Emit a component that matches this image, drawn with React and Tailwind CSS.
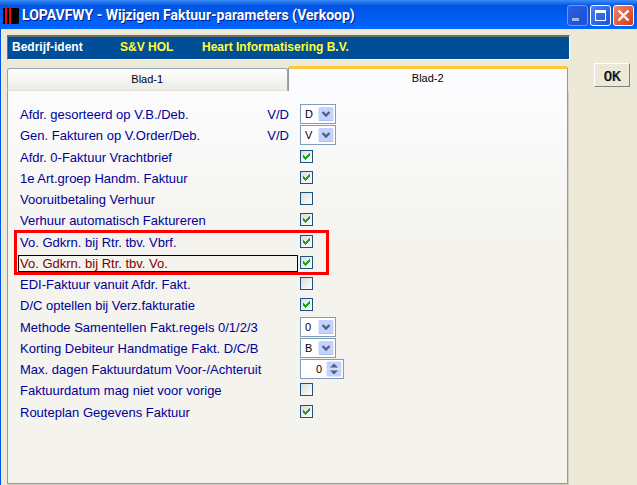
import { useState } from "react";
import clsx from "clsx";

// Rows are kept in small groups, each group is separated by one pixel
const GROUPS = [
    [
        { id: "sortering", label: "Afdr. gesorteerd op V.B./Deb.", hint: "V/D", type: "select", value: "D", options: ["V", "D"] },
        { id: "genereren", label: "Gen. Fakturen op V.Order/Deb.", hint: "V/D", type: "select", value: "V", options: ["V", "D"] },
    ],
    [
        { id: "nulfaktuur", label: "Afdr. 0-Faktuur Vrachtbrief", type: "check", value: true },
        { id: "artgroep", label: "1e Art.groep Handm. Faktuur", type: "check", value: true },
        { id: "vooruit", label: "Vooruitbetaling Verhuur", type: "check", value: false },
        { id: "verhuur", label: "Verhuur automatisch Faktureren", type: "check", value: true },
    ],
    [
        { id: "vbrf", label: "Vo. Gdkrn. bij Rtr. tbv. Vbrf.", type: "check", value: true, marked: true },
        { id: "vo", label: "Vo. Gdkrn. bij Rtr. tbv. Vo.", type: "check", value: true },
        { id: "edi", label: "EDI-Faktuur vanuit Afdr. Fakt.", type: "check", value: false },
        { id: "optellen", label: "D/C optellen bij Verz.fakturatie", type: "check", value: true },
    ],
    [
        { id: "methode", label: "Methode Samentellen Fakt.regels 0/1/2/3", type: "select", value: "0", options: ["0", "1", "2", "3"] },
        { id: "korting", label: "Korting Debiteur Handmatige Fakt. D/C/B", type: "select", value: "B", options: ["D", "C", "B"] },
        { id: "maxdagen", label: "Max. dagen Faktuurdatum Voor-/Achteruit", type: "number", value: 0 },
        { id: "vorige", label: "Faktuurdatum mag niet voor vorige", type: "check", value: false },
    ],
    [{ id: "routeplan", label: "Routeplan Gegevens Faktuur", type: "check", value: true }],
];

function CheckField({ id, defaultChecked }) {
    return (
        <span className="relative mt-[3px] block size-[13px]">
            <input
                id={id}
                type="checkbox"
                defaultChecked={defaultChecked}
                className="peer block size-[13px] appearance-none border border-[#1c5180] bg-linear-to-br from-[#dcdcd7] to-white outline-none"
            />
            <svg
                viewBox="0 0 13 13"
                shapeRendering="crispEdges"
                className="pointer-events-none absolute inset-0 hidden size-[13px] peer-checked:block"
            >
                <path d="M3 5h1v1h1v1h1v-1h1v-1h1v-1h1v-1h1v3h-1v1h-1v1h-1v1h-1v1h-1v-1h-1v-1h-1z" fill="#21a121" />
            </svg>
        </span>
    );
}

function SelectField({ id, value, options }) {
    return (
        <span className="relative block h-5 w-9">
            <select
                id={id}
                defaultValue={value}
                className="block h-5 w-9 appearance-none border border-[#7f9db9] bg-white pl-1 text-[11px] leading-4 text-black outline-none"
            >
                {options.map((option) => (
                    <option key={option}>{option}</option>
                ))}
            </select>
            <svg viewBox="0 0 16 16" className="pointer-events-none absolute top-[2px] right-[2px] size-4">
                <rect x="0.5" y="1" width="15" height="14" rx="1.5" fill="#c3d3fd" />
                <path d="M1 14.5h14" stroke="#a9bff5" />
                <path d="M4.5 6l3.5 3.5L11.500 6" fill="none" stroke="#4d6185" strokeWidth="2.4" />
            </svg>
        </span>
    );
}

function NumberField({ id, value }) {
    return (
        <span className="relative block h-5 w-11">
            <input
                id={id}
                type="text"
                inputMode="numeric"
                defaultValue={value}
                className="block h-5 w-11 border border-[#7f9db9] bg-white pr-[21px] text-right text-[11px] text-black outline-none"
            />
            <svg viewBox="0 0 16 16" className="pointer-events-none absolute top-[2px] right-[2px] size-4">
                <rect x="0.5" y="0.5" width="15" height="15" rx="1.5" fill="#c3d3fd" />
                <path d="M1 8h14" stroke="#dfe8ff" />
                <path d="M4 6.500L8 2.500l4 4zM4 9.500l4 4l4-4z" fill="#4d6185" />
            </svg>
        </span>
    );
}

function Row({ field, active, onFocus }) {
    return (
        <div className="flex h-[21px] items-center" onFocus={onFocus}>
            <label
                htmlFor={field.id}
                className={clsx(
                    "flex h-[17px] w-[280px] items-center justify-between border pr-2 pl-px text-[13px] leading-4 whitespace-nowrap",
                    active ? "border-black text-[#800000]" : "border-transparent text-[#000099]"
                )}
            >
                {field.label}
                {field.hint && <span>{field.hint}</span>}
            </label>
            <span className="ml-[2px] self-start">
                {field.type === "check" && <CheckField id={field.id} defaultChecked={field.value} />}
                {field.type === "select" && <SelectField id={field.id} value={field.value} options={field.options} />}
                {field.type === "number" && <NumberField id={field.id} value={field.value} />}
            </span>
            {/* Red frame around this row and the next one */}
            {field.marked && (
                <span className="pointer-events-none absolute -top-[2px] -left-1 h-[45px] w-[315px] border-3 border-[#ff0000]" />
            )}
        </div>
    );
}

function TitleBar() {
    return (
        <header className="flex h-[29px] items-center bg-linear-to-b from-[#3b8cf5] via-[#0054e3] via-20% to-[#0066ff] pt-[2px] pr-[3px] pl-[3px]">
            <svg viewBox="0 0 16 16" shapeRendering="crispEdges" className="size-4">
                <path d="M0 0h16v16H0z" fill="#000" />
                <path d="M2 0h2v16H2zM6 0h2v16H6z" fill="#f00" />
            </svg>
            <h1 className="ml-[3px] flex-1 font-['Roboto','Noto_Sans',sans-serif] text-[14px] font-bold whitespace-nowrap text-white [text-shadow:1px_1px_0_#0a1883]">
                LOPAVFWY - Wijzigen Faktuur-parameters (Verkoop)
            </h1>
            <div className="flex gap-[2px]">
                <button aria-label="Minimaliseren" className="size-[21px] rounded-[3px] border border-[#7795e6] bg-linear-to-br from-[#2d5fd8] to-[#1c50d8]">
                    <svg viewBox="0 0 19 19" className="size-[19px]">
                        <path d="M4 12h7v3H4z" fill="#a4b8ee" />
                    </svg>
                </button>
                <button aria-label="Maximaliseren" className="size-[21px] rounded-[3px] border border-white bg-linear-to-br from-[#4d80ee] to-[#1c50d8]">
                    <svg viewBox="0 0 19 19" className="size-[19px]">
                        <path d="M4 4h11v11H4zM5 7v7h9V7z" fill="#fff" fillRule="evenodd" />
                    </svg>
                </button>
                <button aria-label="Sluiten" className="size-[21px] rounded-[3px] border border-white bg-linear-to-br from-[#ee8568] to-[#d2380c]">
                    <svg viewBox="0 0 19 19" className="size-[19px]">
                        <path d="M4.500 4.500l10 10M14.500 4.500l-10 10" stroke="#fff" strokeWidth="2.4" />
                    </svg>
                </button>
            </div>
        </header>
    );
}

export default function App() {
    const [activeId, setActiveId] = useState("vo");

    return (
        <div className="flex min-h-screen flex-col bg-[#ece9d8] font-['Liberation_Sans',Arial,sans-serif]">
            <TitleBar />
            <div className="flex flex-1 items-stretch border-l border-[#0054e3] pl-[6px]">
                <main className="flex flex-1 flex-col pt-[6px]">
                    <div className="flex h-[25px] items-center border-t-2 border-r border-b border-l border-t-[#716f64] border-r-white border-b-white border-l-[#716f64] bg-[#004e98] pb-[2px] pl-1 text-[12px] font-bold whitespace-nowrap text-[#ffff33]">
                        <span className="w-[108px] text-white">Bedrijf-ident</span>
                        <span className="w-[82px]">S&amp;V HOL</span>
                        <span>Heart Informatisering B.V.</span>
                    </div>
                    <div role="tablist" className="mt-[6px] flex h-[25px] items-end pr-[2px] text-[11px] text-black">
                        <button
                            role="tab"
                            aria-selected="false"
                            className="h-[23px] flex-1 rounded-t-[3px] border border-b-[#e5e3d8] border-[#91a7b4] bg-linear-to-b from-white to-[#ecebe5]"
                        >
                            Blad-1
                        </button>
                        <button
                            role="tab"
                            aria-selected="true"
                            className="h-[25px] flex-1 rounded-t-[3px] border-t-3 border-r border-l border-t-[#ffc73c] border-r-[#919b9c] border-l-[#919b9c] bg-[#fcfcfe] pb-1 shadow-[inset_0_1px_0_#fff]"
                        >
                            Blad-2
                        </button>
                    </div>
                    <section className="mr-[2px] mb-px flex flex-1 flex-col gap-px border-r border-b border-l border-[#919b9c] bg-linear-to-b from-[#fcfcfe] to-[#f4f3ee] to-40% pt-[13px] pb-4 pl-[10px] shadow-[1px_1px_0_#d0cebf]">
                        {GROUPS.map((group) => (
                            <div key={group[0].id} className="relative">
                                {group.map((field) => (
                                    <Row
                                        key={field.id}
                                        field={field}
                                        active={field.id === activeId}
                                        onFocus={() => setActiveId(field.id)}
                                    />
                                ))}
                            </div>
                        ))}
                    </section>
                </main>
                <aside className="pt-[34px] pr-[7px] pl-6">
                    <button className="flex h-6 w-9 flex-col items-center border border-t-white border-r-[#808080] border-b-[#808080] border-l-white bg-[#ece9d8] pt-[3px] font-['DejaVu_Sans_Mono',monospace] text-[14px] leading-4 text-black">
                        <span className="h-px w-7 shrink-0 bg-[#ffff00]" />
                        <span className="[text-shadow:1px_0_0_#888]">OK</span>
                    </button>
                </aside>
            </div>
        </div>
    );
}
